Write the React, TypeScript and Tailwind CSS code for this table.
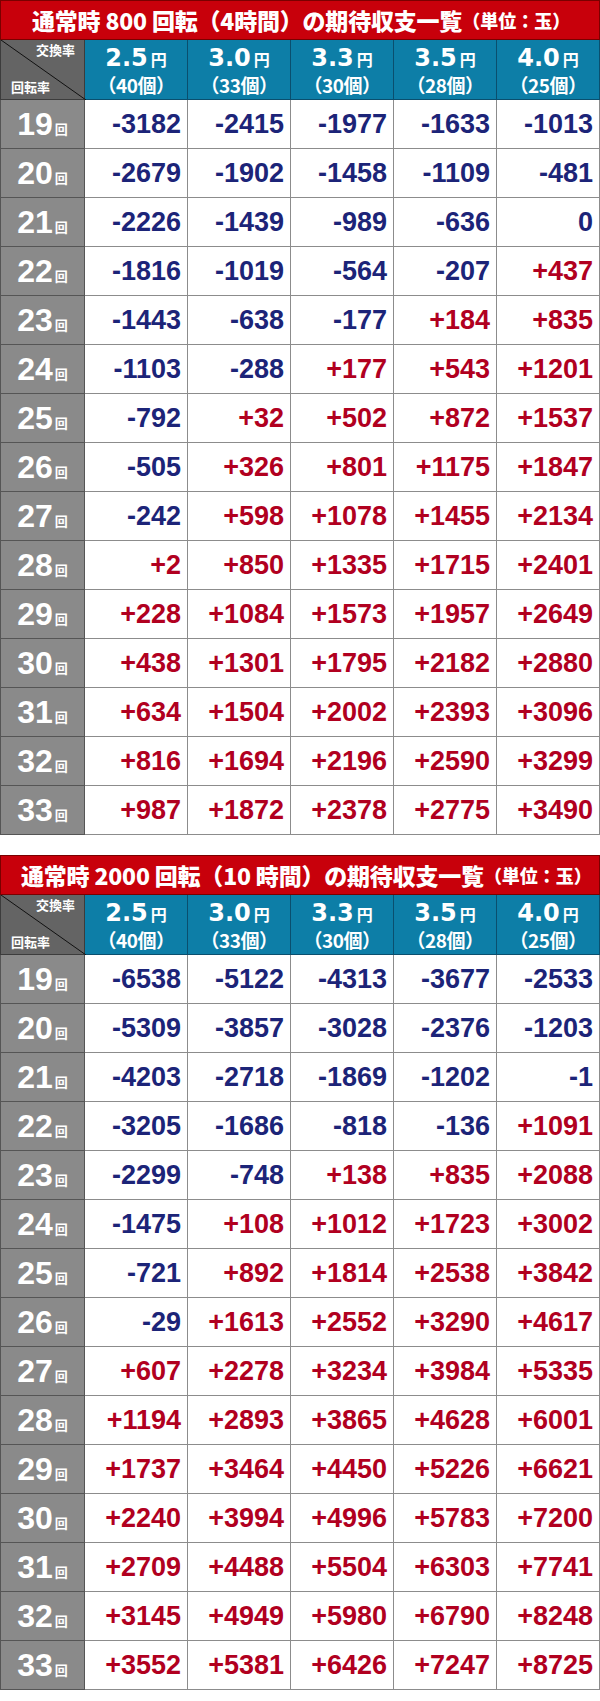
import React from "react"

const RATES = [
  { r: "2.5", n: "40" },
  { r: "3.0", n: "33" },
  { r: "3.3", n: "30" },
  { r: "3.5", n: "28" },
  { r: "4.0", n: "25" },
]

const TABLE_800: string[][] = [
  ["-3182", "-2415", "-1977", "-1633", "-1013"],
  ["-2679", "-1902", "-1458", "-1109", "-481"],
  ["-2226", "-1439", "-989", "-636", "0"],
  ["-1816", "-1019", "-564", "-207", "+437"],
  ["-1443", "-638", "-177", "+184", "+835"],
  ["-1103", "-288", "+177", "+543", "+1201"],
  ["-792", "+32", "+502", "+872", "+1537"],
  ["-505", "+326", "+801", "+1175", "+1847"],
  ["-242", "+598", "+1078", "+1455", "+2134"],
  ["+2", "+850", "+1335", "+1715", "+2401"],
  ["+228", "+1084", "+1573", "+1957", "+2649"],
  ["+438", "+1301", "+1795", "+2182", "+2880"],
  ["+634", "+1504", "+2002", "+2393", "+3096"],
  ["+816", "+1694", "+2196", "+2590", "+3299"],
  ["+987", "+1872", "+2378", "+2775", "+3490"],
]

const TABLE_2000: string[][] = [
  ["-6538", "-5122", "-4313", "-3677", "-2533"],
  ["-5309", "-3857", "-3028", "-2376", "-1203"],
  ["-4203", "-2718", "-1869", "-1202", "-1"],
  ["-3205", "-1686", "-818", "-136", "+1091"],
  ["-2299", "-748", "+138", "+835", "+2088"],
  ["-1475", "+108", "+1012", "+1723", "+3002"],
  ["-721", "+892", "+1814", "+2538", "+3842"],
  ["-29", "+1613", "+2552", "+3290", "+4617"],
  ["+607", "+2278", "+3234", "+3984", "+5335"],
  ["+1194", "+2893", "+3865", "+4628", "+6001"],
  ["+1737", "+3464", "+4450", "+5226", "+6621"],
  ["+2240", "+3994", "+4996", "+5783", "+7200"],
  ["+2709", "+4488", "+5504", "+6303", "+7741"],
  ["+3145", "+4949", "+5980", "+6790", "+8248"],
  ["+3552", "+5381", "+6426", "+7247", "+8725"],
]

const CJK = "font-['Noto_Sans_CJK_JP',sans-serif]"

function HeaderRow() {
  return (
    <>
      {/* 交換率 / 回転率 corner */}
      <div className="relative h-[60px] bg-[#646464] border-l border-b border-r border-[#3c3c3c] text-white">
        <svg className="absolute inset-0" width="85" height="60" viewBox="0 0 85 60">
          <line x1="0" y1="0" x2="85" y2="60" stroke="#111" strokeWidth="1" />
        </svg>
        <span className={`absolute right-[9px] top-[3px] text-[13px] font-bold leading-none ${CJK}`}>交換率</span>
        <span className={`absolute left-[10px] bottom-[6px] text-[13px] font-bold leading-none ${CJK}`}>回転率</span>
      </div>
      {RATES.map((x) => (
        <div
          key={x.r}
          className="flex h-[60px] flex-col items-center justify-center border-r border-b border-[#0a4f6e] bg-[#0d7ea7] text-white"
        >
          <div className="flex items-baseline leading-none">
            <span className="font-['DejaVu_Sans',sans-serif] text-[24px] font-bold">{x.r}</span>
            <span className={`ml-[3px] text-[16px] font-bold ${CJK}`}>円</span>
          </div>
          <div className={`mt-[5px] text-[19px] font-bold leading-none tracking-[-0.5px] ${CJK}`}>（{x.n}個）</div>
        </div>
      ))}
    </>
  )
}

function DataRows({ rows }: { rows: string[][] }) {
  return (
    <>
      {rows.map((row, i) => (
        <React.Fragment key={i}>
          <div className="flex h-[49px] items-center justify-center border-l border-r border-b border-[#555] bg-[#8a8a8a] text-white">
            <span className="font-['Liberation_Sans',sans-serif] text-[32px] font-bold leading-none">{19 + i}</span>
            <span className={`ml-[2px] mt-[9px] text-[13px] font-bold leading-none ${CJK}`}>回</span>
          </div>
          {row.map((v, j) => (
            <div
              key={j}
              className={`flex h-[49px] items-center justify-end border-r border-b border-[#8c8c8c] bg-white pr-[6px] font-['Liberation_Sans',sans-serif] text-[27px] font-bold leading-none ${
                v.startsWith("+") ? "text-[#b1001f]" : "text-[#1c2478]"
              }`}
            >
              {v}
            </div>
          ))}
        </React.Fragment>
      ))}
    </>
  )
}

function Table({
  spins,
  hours,
  rows,
  pl,
}: {
  spins: string
  hours: string
  rows: string[][]
  pl: string
}) {
  return (
    <section>
      <div className={`flex h-[40px] items-center border border-[#7a0000] bg-[#c8000b] text-white ${pl} ${CJK}`}>
        <span className="text-[23px] font-black leading-none tracking-[-0.2px]">
          通常時 {spins} 回転（{hours}時間）の期待収支一覧
        </span>
        <span className="text-[18px] font-black leading-none">（単位：玉）</span>
      </div>
      <div className="grid grid-cols-[85px_repeat(5,103px)]">
        <HeaderRow />
        <DataRows rows={rows} />
      </div>
    </section>
  )
}

export default function App() {
  return (
    <div className="w-[600px] h-[1701px] bg-white">
      <Table spins="800" hours="4" rows={TABLE_800} pl="pl-[31px]" />
      <div className="h-[20px]" />
      <Table spins="2000" hours="10 " rows={TABLE_2000} pl="pl-[20px]" />
    </div>
  )
}
